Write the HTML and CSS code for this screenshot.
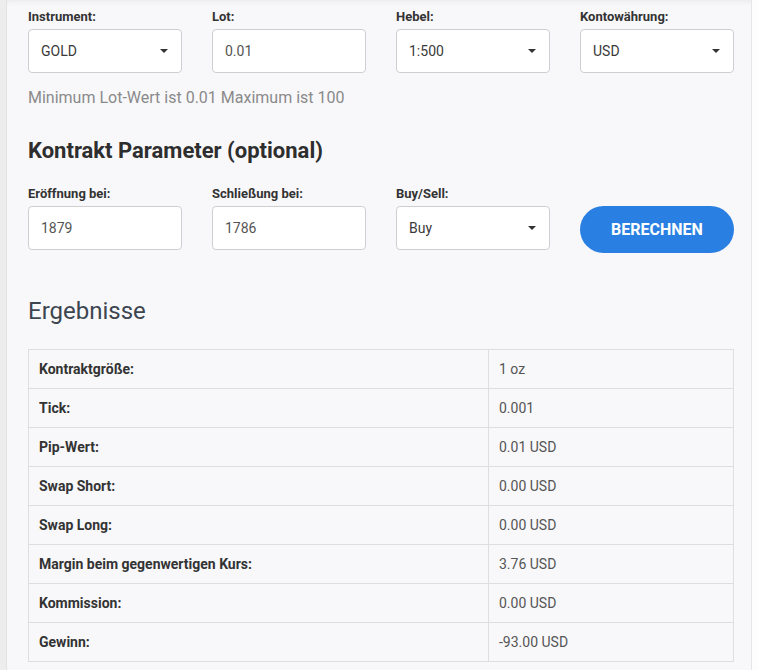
FILE: index.html
```html
<!DOCTYPE html>
<html lang="de">
<head>
  <meta charset="UTF-8">
  <meta name="viewport" content="width=device-width, initial-scale=1.0">
  <title>Margin Rechner</title>
  <link rel="stylesheet" href="styles.css">
</head>
<body>

  <div class="calc">

    <!-- Haupt-Parameter -->
    <div class="form-row">
      <div class="field">
        <label for="instrument">Instrument:</label>
        <div class="select-wrap">
          <select id="instrument"><option>GOLD</option></select>
        </div>
      </div>
      <div class="field">
        <label for="lot">Lot:</label>
        <input type="text" id="lot" value="0.01">
      </div>
      <div class="field">
        <label for="hebel">Hebel:</label>
        <div class="select-wrap">
          <select id="hebel"><option>1:500</option></select>
        </div>
      </div>
      <div class="field">
        <label for="currency">Kontowährung:</label>
        <div class="select-wrap">
          <select id="currency"><option>USD</option></select>
        </div>
      </div>
    </div>

    <p class="hint">Minimum Lot-Wert ist 0.01 Maximum ist 100</p>

    <h2 class="section-title">Kontrakt Parameter (optional)</h2>

    <div class="form-row">
      <div class="field">
        <label for="open">Eröffnung bei:</label>
        <input type="text" id="open" value="1879">
      </div>
      <div class="field">
        <label for="close">Schließung bei:</label>
        <input type="text" id="close" value="1786">
      </div>
      <div class="field">
        <label for="side">Buy/Sell:</label>
        <div class="select-wrap">
          <select id="side"><option>Buy</option><option>Sell</option></select>
        </div>
      </div>
      <div class="field field-btn">
        <button class="calc-btn" type="button">BERECHNEN</button>
      </div>
    </div>

    <!-- Ergebnisse -->
    <h3 class="results-title">Ergebnisse</h3>

    <table class="results">
      <tr><th>Kontraktgröße:</th><td>1 oz</td></tr>
      <tr><th>Tick:</th><td>0.001</td></tr>
      <tr><th>Pip-Wert:</th><td>0.01 USD</td></tr>
      <tr><th>Swap Short:</th><td>0.00 USD</td></tr>
      <tr><th>Swap Long:</th><td>0.00 USD</td></tr>
      <tr><th>Margin beim gegenwertigen Kurs:</th><td>3.76 USD</td></tr>
      <tr><th>Kommission:</th><td>0.00 USD</td></tr>
      <tr><th>Gewinn:</th><td>-93.00 USD</td></tr>
    </table>

  </div>

</body>
</html>
```

FILE: styles.css
```css
/* Allgemein */
body {
  margin: 0;
  font-family: Roboto, 'Liberation Sans', sans-serif;
  color: #333;
  background: linear-gradient(to right, #ededed 6px, #fdfdfd 6px);
}

.calc {
  margin: 0 6px;
  padding: 8px 17px 40px 21px;
  background: #f8f8fa;
  border-left: 1px solid #e2e2e4;
  border-right: 1px solid #e6e6e8;
  box-shadow: inset 0 7px 6px -6px rgba(0, 0, 0, 0.07);
}

/* Formular */
.form-row {
  display: grid;
  grid-template-columns: repeat(4, 154px);
  column-gap: 30px;
}

.field label {
  display: block;
  font-size: 13px;
  font-weight: 700;
  line-height: 18px;
  margin-bottom: 3px;
  color: #333;
}

.field input,
.field select {
  box-sizing: border-box;
  width: 100%;
  height: 44px;
  padding: 0 12px;
  font-family: inherit;
  font-size: 14px;
  color: #555;
  background: #fff;
  border: 1px solid #cfcfd2;
  border-radius: 4px;
  outline: none;
  appearance: none;
  -webkit-appearance: none;
}

.field select {
  color: #3a3a3a;
}

.select-wrap {
  position: relative;
}

.select-wrap::after {
  content: '';
  position: absolute;
  right: 14px;
  top: 20px;
  border-left: 4px solid transparent;
  border-right: 4px solid transparent;
  border-top: 4px solid #333;
  pointer-events: none;
}

.field-btn {
  display: flex;
  align-items: flex-end;
}

.calc-btn {
  width: 100%;
  height: 47px;
  margin-bottom: -3px;
  background: #2a7fe2;
  color: #fff;
  border: none;
  border-radius: 24px;
  font-family: inherit;
  font-size: 16px;
  font-weight: 700;
  cursor: pointer;
}

.calc-btn:hover {
  background: #1d6fd0;
}

.hint {
  margin: 14px 0 0;
  font-size: 16px;
  line-height: 22px;
  color: #8a8a8a;
}

.section-title {
  margin: 28px 0 20px;
  font-size: 22px;
  line-height: 28px;
  font-weight: 700;
  color: #2e2e2e;
}

.results-title {
  margin: 45px 0 22px;
  font-size: 24px;
  line-height: 32px;
  font-weight: 400;
  color: #3c4550;
}

/* Tabelle */
.results {
  width: 100%;
  border-collapse: collapse;
  font-size: 14px;
}

.results th,
.results td {
  height: 38px;
  padding: 0 10px;
  border: 1px solid #dededf;
  text-align: left;
  vertical-align: middle;
}

.results th {
  width: 439px;
  font-weight: 700;
  color: #333;
}

.results td {
  color: #555;
}
```
